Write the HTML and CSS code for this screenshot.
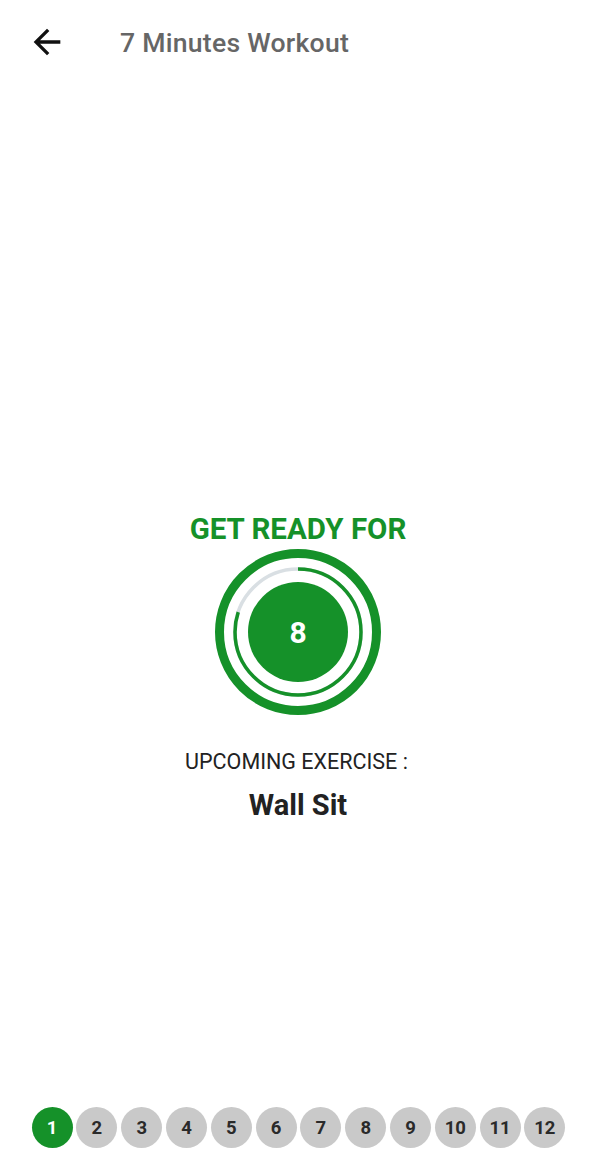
FILE: index.html
```html
<!DOCTYPE html>
<html>
<head>
<meta charset="utf-8">
<link rel="stylesheet" href="styles.css">
</head>
<body>
<div class="page">
  <header class="toolbar">
    <button class="back" aria-label="Back">
      <svg width="40" height="40" viewBox="0 0 24 24"><path d="M20 11H7.83l5.59-5.59L12 4l-8 8 8 8 1.41-1.41L7.83 13H20v-2z" fill="#111"/></svg>
    </button>
    <h1 class="title">7 Minutes Workout</h1>
  </header>
  <main class="main">
    <div class="ready">GET READY FOR</div>
    <div class="timer">
      <svg width="170" height="170" viewBox="0 0 170 170">
        <circle cx="85" cy="85" r="78.5" fill="none" stroke="#159129" stroke-width="9"/>
        <circle cx="85" cy="85" r="63" fill="none" stroke="#d9dfe3" stroke-width="3.5"/>
        <circle cx="85" cy="85" r="63" fill="none" stroke="#159129" stroke-width="3.5" stroke-dasharray="316.7 400" transform="rotate(-90 85 85)"/>
        <circle cx="85" cy="85" r="50" fill="#159129"/>
      </svg>
      <span class="count">8</span>
    </div>
    <div class="upcoming">UPCOMING EXERCISE :</div>
    <div class="exercise">Wall Sit</div>
  </main>
  <footer class="steps">
    <span class="step active">1</span>
    <span class="step">2</span>
    <span class="step">3</span>
    <span class="step">4</span>
    <span class="step">5</span>
    <span class="step">6</span>
    <span class="step">7</span>
    <span class="step">8</span>
    <span class="step">9</span>
    <span class="step">10</span>
    <span class="step">11</span>
    <span class="step">12</span>
  </footer>
</div>
</body>
</html>
```
FILE: styles.css
```css
html, body {
  margin: 0;
  padding: 0;
  background: #fff;
}
body {
  font-family: Roboto, "Noto Sans", Arial, sans-serif;
}
.page {
  height: 1160px;
  display: flex;
  flex-direction: column;
}
.toolbar {
  height: 84px;
  display: flex;
  align-items: center;
  padding-left: 27px;
  box-sizing: border-box;
}
.back {
  width: 40px;
  height: 40px;
  border: 0;
  padding: 0;
  background: none;
  display: flex;
}
.title {
  margin: 0 0 0 53px;
  font-size: 26.6px;
  font-weight: 500;
  color: #666;
  letter-spacing: 0.25px;
}
.main {
  flex: 1;
  display: flex;
  flex-direction: column;
  align-items: center;
  padding-top: 428px;
}
.ready {
  font-size: 29.5px;
  font-weight: 700;
  color: #159129;
  line-height: 34px;
  margin-left: 3px;
}
.timer {
  position: relative;
  width: 170px;
  height: 170px;
  margin-top: 1px;
  margin-left: 3px;
}
.timer svg {
  display: block;
}
.count {
  position: absolute;
  inset: 0;
  display: flex;
  align-items: center;
  justify-content: center;
  color: #fff;
  font-size: 30px;
  font-weight: 700;
}
.upcoming {
  margin-top: 32px;
  font-size: 21.5px;
  color: #222;
  line-height: 26px;
}
.exercise {
  margin-top: 13px;
  margin-left: 3px;
  font-size: 29px;
  font-weight: 700;
  color: #222;
  line-height: 34px;
}
.steps {
  display: flex;
  justify-content: center;
  gap: 3.8px;
  padding-bottom: 12px;
  padding-left: 4px;
}
.step {
  width: 41px;
  height: 41px;
  border-radius: 50%;
  background: #c9c9c9;
  color: #2a2a2a;
  font-size: 18.5px;
  font-weight: 700;
  display: flex;
  align-items: center;
  justify-content: center;
}
.step.active {
  background: #159129;
  color: #fff;
}
```
